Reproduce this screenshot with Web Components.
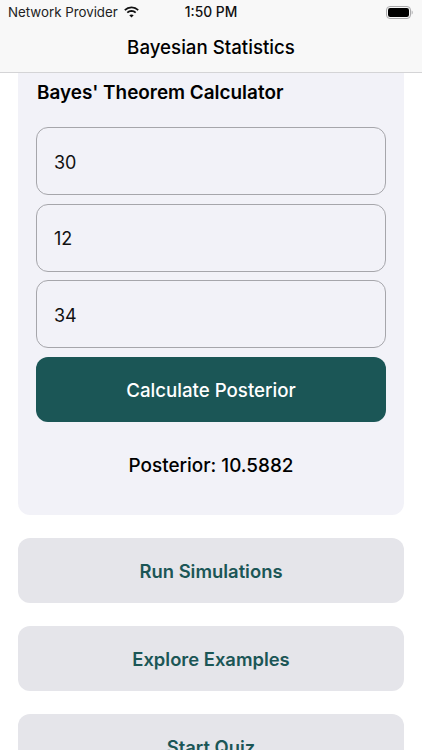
<!DOCTYPE html>
<html lang="en">
<head>
<meta charset="utf-8">
<title>Bayesian Statistics</title>
<style>
  html, body { margin: 0; height: 750px; overflow: hidden; background: #fff; }
  body { font-family: Inter, "Liberation Sans", sans-serif; color: #000; }
</style>
</head>
<body>
<app-header title="Bayesian Statistics"></app-header>
<calc-card heading="Bayes' Theorem Calculator">
  <value-field value="30"></value-field>
  <value-field value="12"></value-field>
  <value-field value="34"></value-field>
  <primary-button>Calculate Posterior</primary-button>
  <span slot="result">Posterior: 10.5882</span>
</calc-card>
<menu-list>
  <menu-button>Run Simulations</menu-button>
  <menu-button>Explore Examples</menu-button>
  <menu-button>Start Quiz</menu-button>
</menu-list>

<script>
class AppHeader extends HTMLElement {
  constructor() {
    super();
    this.attachShadow({ mode: 'open' });
  }

  connectedCallback() {
    const title = this.getAttribute('title') || '';
    this.shadowRoot.innerHTML = `
      <style>
        :host {
          display: block;
          height: 72px;
          background: #f8f8f8;
          border-bottom: 1px solid #d4d4d6;
        }
        .status {
          display: grid;
          grid-template-columns: 1fr auto 1fr;
          align-items: center;
          height: 24px;
          padding: 0 8px;
          font-size: 13.3px;
          color: #222;
        }
        .left { display: flex; align-items: center; gap: 5px; }
        .time { font-size: 13.8px; font-weight: 500; color: #111; }
        .right { display: flex; justify-content: flex-end; padding-right: 1px; }
        svg { display: block; }
        .title {
          display: flex;
          justify-content: center;
          align-items: center;
          height: 47px;
          font-size: 18.7px;
          font-weight: 500;
        }
      </style>
      <div class="status">
        <div class="left">
          <span>Network Provider</span>
          <svg width="17" height="12" viewBox="0 0 17 12">
            <path d="M8.500 2.300c2.400 0 4.500.9 6.100 2.500l1.200-1.300A10.400 10.400 0 0 0 8.500.5a10.400 10.400 0 0 0-7.300 3l1.200 1.300a8.600 8.600 0 0 1 6.100-2.500z" fill="#111"/>
            <path d="M8.500 5.900c1.400 0 2.600.5 3.600 1.400l1.200-1.300a7 7 0 0 0-9.600 0l1.200 1.300c1-.9 2.200-1.400 3.600-1.400z" fill="#111"/>
            <path d="M8.500 8.400c-.9 0-1.600.3-2.200.9l2.200 2.300 2.200-2.300c-.6-.6-1.300-.9-2.200-.9z" fill="#111"/>
          </svg>
        </div>
        <div class="time">1:50 PM</div>
        <div class="right">
          <svg width="27" height="13" viewBox="0 0 27 13">
            <rect x="0.5" y="0.5" width="24" height="12" rx="3.5" fill="none" stroke="#a9a9ab"/>
            <rect x="2" y="2" width="21" height="9" rx="2.2" fill="#000"/>
            <path d="M25.600 4.500c.8.3 1.200 1.100 1.200 2s-.4 1.700-1.200 2z" fill="#b5b5b7"/>
          </svg>
        </div>
      </div>
      <div class="title">${title}</div>
    `;
  }
}

class CalcCard extends HTMLElement {
  constructor() {
    super();
    this.attachShadow({ mode: 'open' });
  }

  connectedCallback() {
    const heading = this.getAttribute('heading') || '';
    this.shadowRoot.innerHTML = `
      <style>
        :host {
          display: block;
          margin: 0 18px;
          height: 442px;
          box-sizing: border-box;
          padding: 0 18px;
          background: #f2f2f8;
          border-radius: 0 0 12px 12px;
        }
        h2 {
          margin: 0;
          height: 54px;
          display: flex;
          align-items: center;
          padding: 0 0 15px 1px;
          box-sizing: border-box;
          font-size: 18.9px;
          font-weight: 600;
        }
        .fields { display: flex; flex-direction: column; gap: 8.5px; }
        .result {
          display: flex;
          justify-content: center;
          align-items: center;
          height: 86px;
          padding-top: 2px;
          box-sizing: border-box;
          font-size: 18.9px;
          font-weight: 500;
        }
      </style>
      <h2>${heading}</h2>
      <div class="fields"><slot></slot></div>
      <div class="result"><slot name="result"></slot></div>
    `;
  }
}

class ValueField extends HTMLElement {
  constructor() {
    super();
    this.attachShadow({ mode: 'open' });
  }

  connectedCallback() {
    this.shadowRoot.innerHTML = `
      <style>
        :host {
          display: flex;
          align-items: center;
          height: 68px;
          box-sizing: border-box;
          padding: 2px 17px 0;
          border: 1.5px solid #a6a6ab;
          border-radius: 12px;
          font-size: 18px;
          color: #111;
        }
      </style>
      <span>${this.getAttribute('value') || ''}</span>
    `;
  }
}

class PrimaryButton extends HTMLElement {
  constructor() {
    super();
    this.attachShadow({ mode: 'open' });
  }

  connectedCallback() {
    this.shadowRoot.innerHTML = `
      <style>
        :host {
          display: flex;
          justify-content: center;
          align-items: center;
          height: 65px;
          padding-top: 2px;
          box-sizing: border-box;
          background: #1b5656;
          border-radius: 12px;
          color: #fff;
          font-size: 18.7px;
          font-weight: 500;
        }
      </style>
      <slot></slot>
    `;
  }
}

class MenuList extends HTMLElement {
  constructor() {
    super();
    this.attachShadow({ mode: 'open' });
  }

  connectedCallback() {
    this.shadowRoot.innerHTML = `
      <style>
        :host {
          display: flex;
          flex-direction: column;
          gap: 23px;
          margin: 23px 18px 0;
        }
      </style>
      <slot></slot>
    `;
  }
}

class MenuButton extends HTMLElement {
  constructor() {
    super();
    this.attachShadow({ mode: 'open' });
  }

  connectedCallback() {
    this.shadowRoot.innerHTML = `
      <style>
        :host {
          display: flex;
          justify-content: center;
          align-items: center;
          height: 65px;
          flex-shrink: 0;
          background: #e5e5ea;
          border-radius: 12px;
          color: #1b5656;
          font-size: 18.4px;
          font-weight: 600;
        }
      </style>
      <slot></slot>
    `;
  }
}

customElements.define('app-header', AppHeader);
customElements.define('calc-card', CalcCard);
customElements.define('value-field', ValueField);
customElements.define('primary-button', PrimaryButton);
customElements.define('menu-list', MenuList);
customElements.define('menu-button', MenuButton);
</script>
</body>
</html>
